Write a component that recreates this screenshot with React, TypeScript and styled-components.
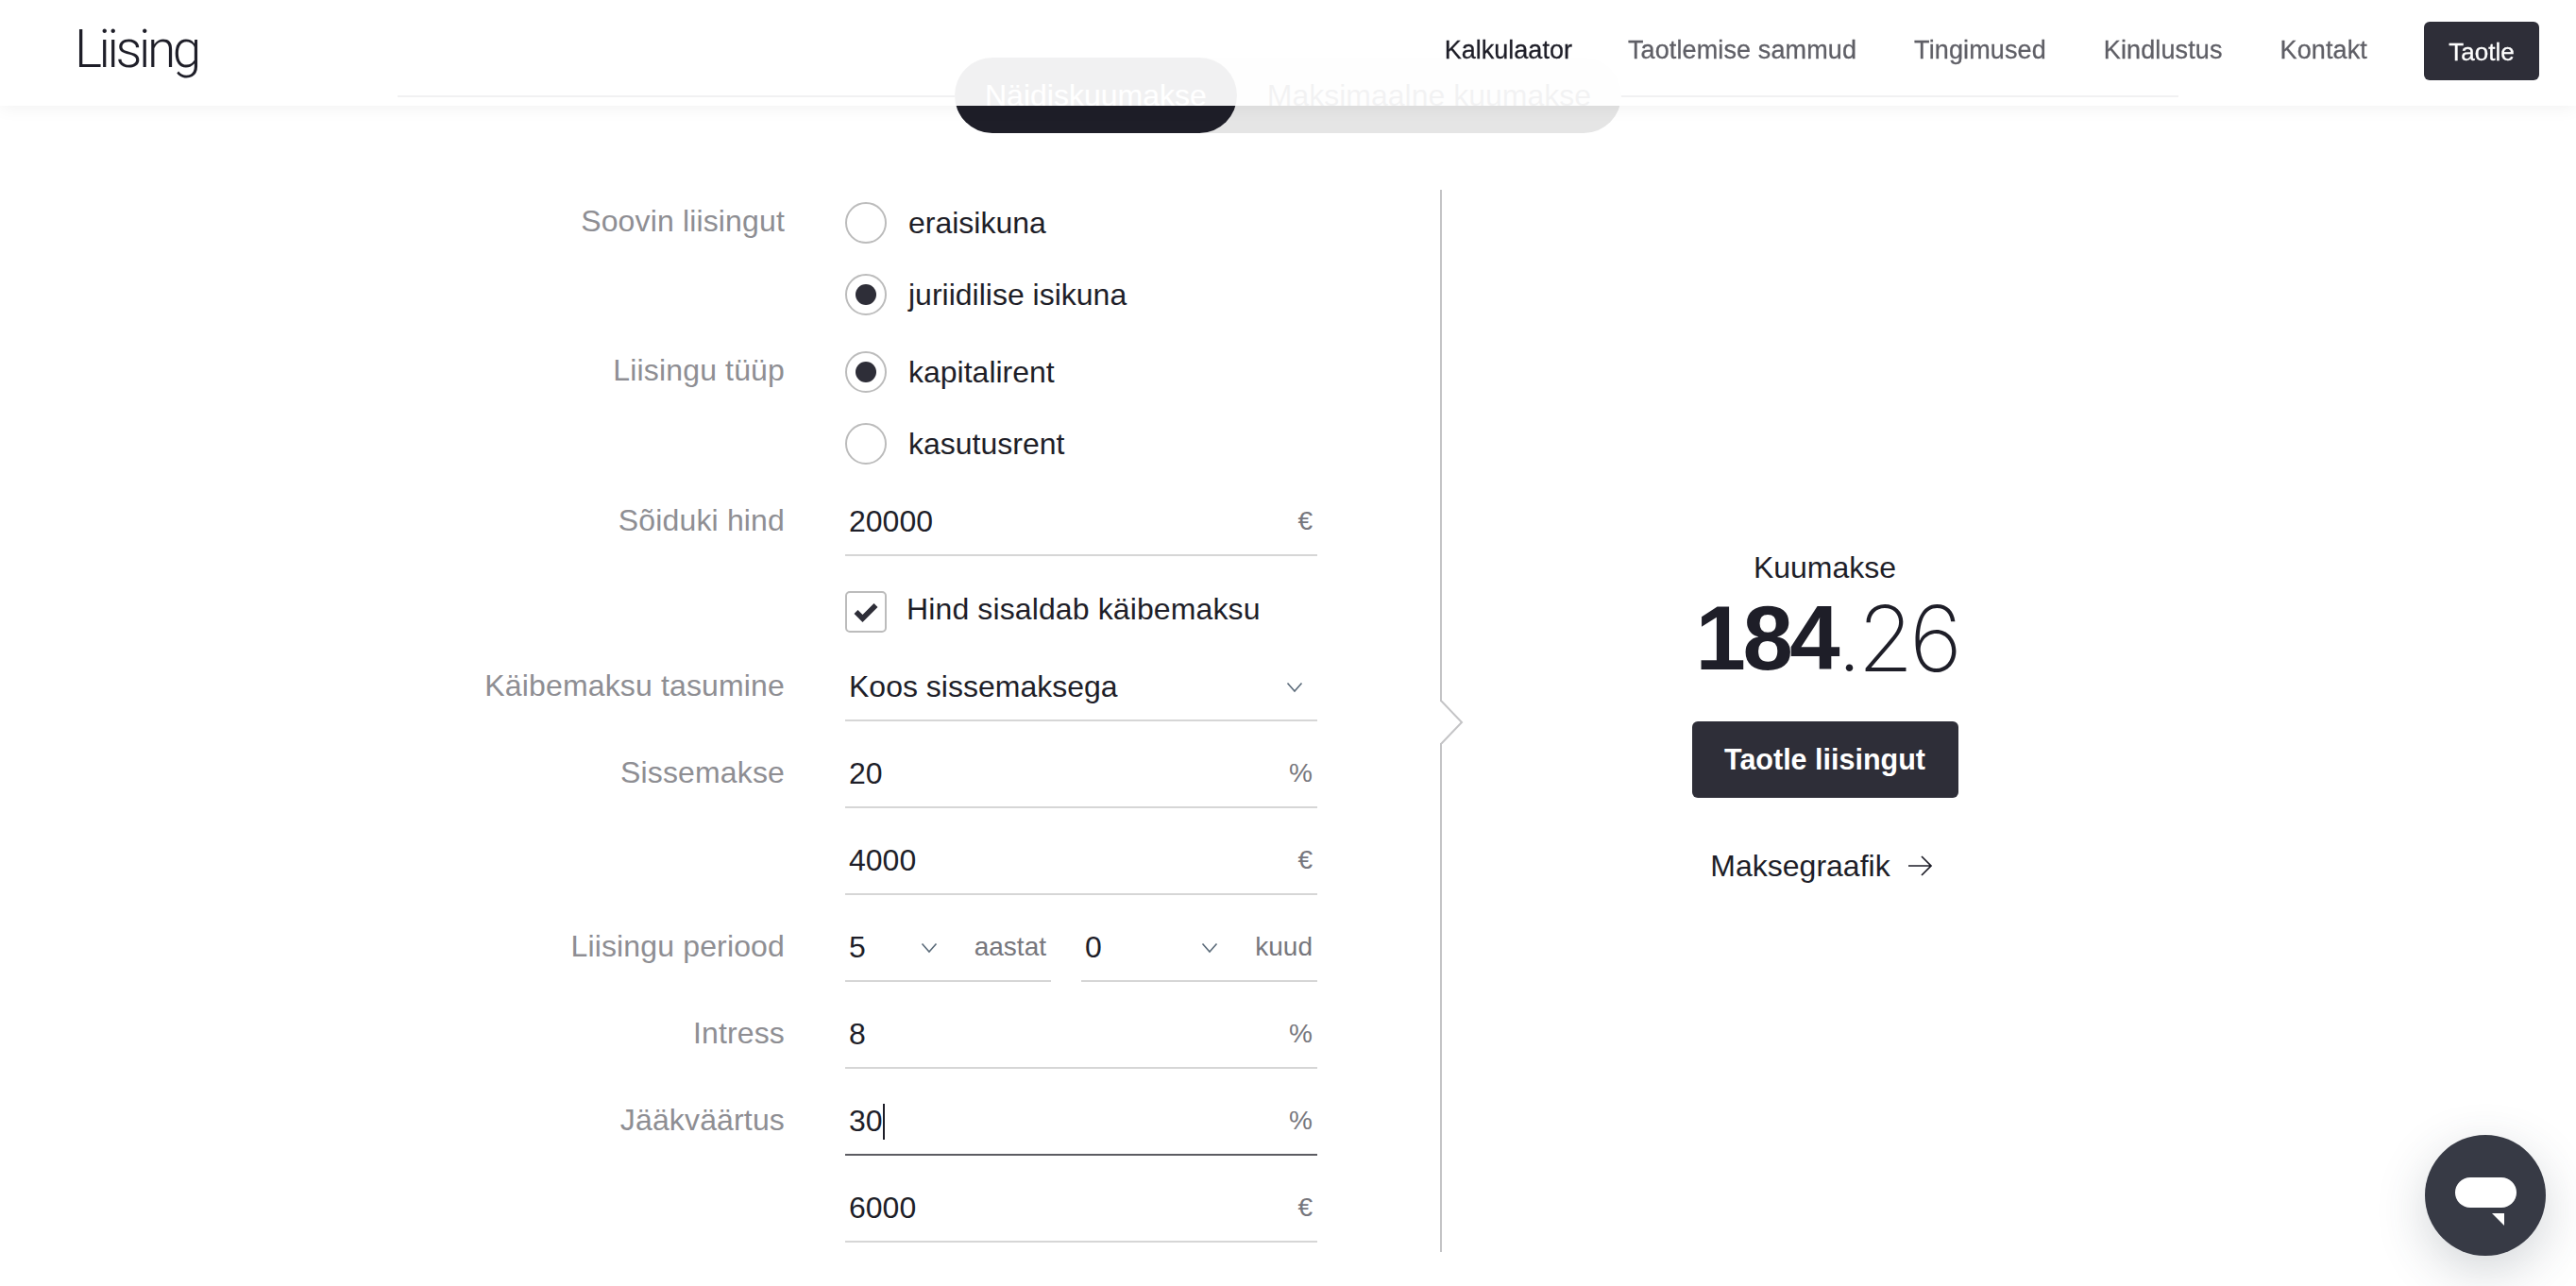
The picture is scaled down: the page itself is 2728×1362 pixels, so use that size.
import React from "react";
import styled, { createGlobalStyle } from "styled-components";

const GlobalStyle = createGlobalStyle`
  html, body {
    margin: 0;
    height: 100%;
    overflow: hidden;
    background: #fff;
    color: #1e1e28;
    font-family: "Liberation Sans", Arial, sans-serif;
  }
  * { box-sizing: border-box; }
`;

const Header = styled.header`
  position: fixed;
  top: 0;
  left: 0;
  right: 0;
  z-index: 10;
  height: 112px;
  padding: 0 39px 4px 79px;
  display: flex;
  align-items: center;
  justify-content: space-between;
  background: rgba(255, 255, 255, 0.94);
  box-shadow: 0 2px 18px rgba(0, 0, 0, 0.06);
`;

const Logo = styled.div`
  font-family: Roboto, sans-serif;
  font-weight: 300;
  font-size: 55px;
  letter-spacing: -3.4px;
  line-height: 1;
  margin-top: -3px;
`;

const Nav = styled.nav`
  display: flex;
  align-items: center;
  gap: 61px;
`;

const NavLink = styled.a<{ $active?: boolean }>`
  font-size: 27px;
  line-height: 34px;
  letter-spacing: ${({ $active }) => ($active ? "0" : "0.12px")};
  margin-top: -2px;
  margin-right: ${({ $active }) => ($active ? "-2px" : "0")};
  color: ${({ $active }) => ($active ? "#1e1e28" : "#5f5f66")};
  -webkit-text-stroke: 0.3px currentColor;
`;

const NavButton = styled.button`
  width: 122px;
  height: 62px;
  margin-left: -1px;
  border: none;
  border-radius: 6px;
  background: #2e2e38;
  color: #fff;
  font: inherit;
  font-size: 26px;
  padding: 2px 0 0;
  -webkit-text-stroke: 0.3px currentColor;
`;

const Page = styled.main`
  width: 1886px;
  margin: 0 auto;
  padding-top: 61px;
`;

const TabBar = styled.div`
  position: relative;
  display: flex;
  justify-content: center;
  height: 80px;
  &::before {
    content: "";
    position: absolute;
    left: 0;
    right: 0;
    top: 40px;
    height: 2px;
    background: #1e1e28;
  }
`;

const Tabs = styled.div`
  position: relative;
  display: flex;
  border-radius: 40px;
  background: #e5e5e5;
`;

const Tab = styled.div<{ $active?: boolean }>`
  padding: 0 32px;
  line-height: 80px;
  font-size: 32px;
  border-radius: 40px;
  color: ${({ $active }) => ($active ? "#fff" : "#2e2e38")};
  background: ${({ $active }) => ($active ? "#1e1e28" : "transparent")};
`;

const Content = styled.div`
  display: grid;
  grid-template-columns: 1104px 782px;
  margin-top: 60px;
`;

const Form = styled.form`
  padding-top: 13px;
`;

const Row = styled.div<{ $top?: number }>`
  display: grid;
  grid-template-columns: 410px 500px;
  column-gap: 64px;
  margin-top: ${({ $top }) => $top ?? 32}px;
`;

const Label = styled.div<{ $shift?: number }>`
  text-align: right;
  font-size: 32px;
  line-height: 46px;
  letter-spacing: 0.15px;
  color: #8e8e93;
  margin-top: ${({ $shift }) => $shift ?? -1}px;
`;

const RadioGroup = styled.div`
  display: flex;
  flex-direction: column;
  gap: 32px;
`;

const Option = styled.div`
  display: flex;
  align-items: center;
  gap: 23px;
  height: 44px;
  font-size: 32px;
  line-height: 48px;
`;

const Radio = styled.span<{ $checked?: boolean }>`
  width: 44px;
  height: 44px;
  flex: none;
  border-radius: 50%;
  border: 2px solid #bcbcbc;
  display: flex;
  align-items: center;
  justify-content: center;
  &::after {
    content: "";
    display: ${({ $checked }) => ($checked ? "block" : "none")};
    width: 22px;
    height: 22px;
    border-radius: 50%;
    background: #2e2e38;
  }
`;

const CheckBox = styled.span`
  width: 44px;
  height: 44px;
  flex: none;
  border-radius: 5px;
  border: 2px solid #bcbcbc;
  display: flex;
  align-items: center;
  justify-content: center;
`;

const CheckText = styled.span`
  margin: -6px 0 0 -2px;
  letter-spacing: 0.12px;
`;

const Fields = styled.div`
  display: flex;
  gap: 32px;
`;

const Field = styled.div<{ $focused?: boolean; $width?: number }>`
  display: flex;
  height: 60px;
  padding: 0 4px;
  flex: ${({ $width }) => ($width ? `0 0 ${$width}px` : "1")};
  border-bottom: 2px solid ${({ $focused }) => ($focused ? "#5c5c62" : "#d6d6d6")};
  font-size: 32px;
  line-height: 46px;
`;

const Value = styled.span`
  flex: 1;
  display: flex;
  align-items: flex-start;
`;

const Caret = styled.span`
  width: 2px;
  height: 38px;
  margin-top: 5px;
  background: #1e1e28;
`;

const Unit = styled.span`
  font-size: 28px;
  color: #77777d;
  margin-right: 1px;
`;

const Chevron = styled.svg<{ $gap?: number }>`
  width: 18px;
  height: 12px;
  flex: none;
  margin-top: 18px;
  margin-right: ${({ $gap }) => $gap ?? 0}px;
`;

const Panel = styled.aside`
  position: relative;
  height: 1125px;
  padding: 0 0 10px 31px;
  border-left: 2px solid #c4c4c6;
  display: flex;
  flex-direction: column;
  align-items: center;
  justify-content: center;
`;

const PanelNotch = styled.svg`
  position: absolute;
  left: -2px;
  top: 541px;
  width: 26px;
  height: 46px;
`;

const PanelTitle = styled.div`
  font-size: 32px;
  line-height: 40px;
`;

const Amount = styled.div`
  margin: 7px 0 0 4px;
  display: flex;
  font-size: 96px;
  line-height: 96px;
`;

const AmountWhole = styled.span`
  font-weight: 700;
  letter-spacing: -3.5px;
`;

const AmountCents = styled.span`
  font-family: Inter, sans-serif;
  font-weight: 200;
  letter-spacing: -4.5px;
`;

const ApplyButton = styled.button`
  margin-top: 40px;
  width: 282px;
  height: 81px;
  border: none;
  border-radius: 6px;
  background: #2e2e38;
  color: #fff;
  font: inherit;
  font-weight: 700;
  font-size: 30.5px;
`;

const ScheduleLink = styled.a`
  margin-top: 52px;
  padding-right: 7px;
  display: flex;
  align-items: center;
  gap: 19px;
  font-size: 32px;
  line-height: 40px;
`;

const ChatButton = styled.button`
  position: fixed;
  left: 2568px;
  top: 1202px;
  z-index: 11;
  width: 128px;
  height: 128px;
  border: none;
  padding: 13px 0 0;
  border-radius: 50%;
  background: #373a45;
  box-shadow: 0 16px 52px rgba(55, 70, 80, 0.22);
  display: flex;
  align-items: center;
  justify-content: center;
`;

const ChevronIcon = ({ gap }: { gap?: number }) => (
  <Chevron $gap={gap} viewBox="0 0 18 12" fill="none">
    <path d="M1.5 1.5 9 10l7.5-8.5" stroke="#5b6b7a" strokeWidth="1.6" />
  </Chevron>
);

const App = () => {
  return (
    <>
      <GlobalStyle />
      <Header>
        <Logo>Liising</Logo>
        <Nav>
          <NavLink $active>Kalkulaator</NavLink>
          <NavLink>Taotlemise sammud</NavLink>
          <NavLink>Tingimused</NavLink>
          <NavLink>Kindlustus</NavLink>
          <NavLink>Kontakt</NavLink>
          <NavButton>Taotle</NavButton>
        </Nav>
      </Header>

      <Page>
        <TabBar>
          <Tabs>
            <Tab $active>Näidiskuumakse</Tab>
            <Tab>Maksimaalne kuumakse</Tab>
          </Tabs>
        </TabBar>

        <Content>
          <Form>
            <Row $top={0}>
              <Label $shift={-3}>Soovin liisingut</Label>
              <RadioGroup>
                <Option>
                  <Radio />
                  eraisikuna
                </Option>
                <Option>
                  <Radio $checked />
                  juriidilise isikuna
                </Option>
              </RadioGroup>
            </Row>
            <Row $top={38}>
              <Label $shift={-3}>Liisingu tüüp</Label>
              <RadioGroup>
                <Option>
                  <Radio $checked />
                  kapitalirent
                </Option>
                <Option>
                  <Radio />
                  kasutusrent
                </Option>
              </RadioGroup>
            </Row>
            <Row $top={37}>
              <Label>Sõiduki hind</Label>
              <Field>
                <Value>20000</Value>
                <Unit>€</Unit>
              </Field>
            </Row>
            <Row $top={37}>
              <span />
              <Option>
                <CheckBox>
                  <svg width="26" height="22" viewBox="0 0 26 22" fill="none">
                    <path d="M2.5 11 9.5 18 23.5 4" stroke="#2e2e38" strokeWidth="5.6" />
                  </svg>
                </CheckBox>
                <CheckText>Hind sisaldab käibemaksu</CheckText>
              </Option>
            </Row>
            <Row $top={34}>
              <Label>Käibemaksu tasumine</Label>
              <Field>
                <Value>Koos sissemaksega</Value>
                <ChevronIcon gap={11} />
              </Field>
            </Row>
            <Row>
              <Label>Sissemakse</Label>
              <Field>
                <Value>20</Value>
                <Unit>%</Unit>
              </Field>
            </Row>
            <Row>
              <span />
              <Field>
                <Value>4000</Value>
                <Unit>€</Unit>
              </Field>
            </Row>
            <Row>
              <Label>Liisingu periood</Label>
              <Fields>
                <Field $width={218}>
                  <Value>5</Value>
                  <ChevronIcon gap={39} />
                  <Unit>aastat</Unit>
                </Field>
                <Field>
                  <Value>0</Value>
                  <ChevronIcon gap={39} />
                  <Unit>kuud</Unit>
                </Field>
              </Fields>
            </Row>
            <Row>
              <Label>Intress</Label>
              <Field>
                <Value>8</Value>
                <Unit>%</Unit>
              </Field>
            </Row>
            <Row>
              <Label>Jääkväärtus</Label>
              <Field $focused>
                <Value>
                  30
                  <Caret />
                </Value>
                <Unit>%</Unit>
              </Field>
            </Row>
            <Row>
              <span />
              <Field>
                <Value>6000</Value>
                <Unit>€</Unit>
              </Field>
            </Row>
          </Form>

          <Panel>
            <PanelNotch viewBox="0 0 26 46" fill="none">
              <path d="M0 1h2v44H0z" fill="#fff" />
              <path d="M1 0 23 23 1 46" stroke="#c4c4c6" strokeWidth="2" />
            </PanelNotch>
            <PanelTitle>Kuumakse</PanelTitle>
            <Amount>
              <AmountWhole>184</AmountWhole>
              <AmountCents>.26</AmountCents>
            </Amount>
            <ApplyButton>Taotle liisingut</ApplyButton>
            <ScheduleLink>
              Maksegraafik
              <svg width="26" height="24" viewBox="0 0 26 24" fill="none">
                <path d="M0 12h24M14 2l10 10-10 10" stroke="#1e1e28" strokeWidth="1.7" />
              </svg>
            </ScheduleLink>
          </Panel>
        </Content>
      </Page>

      <ChatButton aria-label="Chat">
        <svg width="65" height="52" viewBox="0 0 65 52" fill="#fff">
          <rect x="0" y="0" width="65" height="32" rx="16" />
          <path d="M39 38h13v13z" />
        </svg>
      </ChatButton>
    </>
  );
};

export default App;
